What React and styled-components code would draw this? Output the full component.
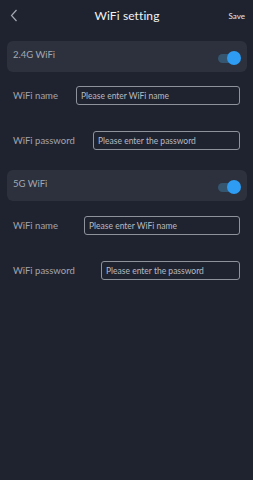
import React from "react";
import styled, { createGlobalStyle } from "styled-components";

const Global = createGlobalStyle`
  html, body {
    margin: 0;
    padding: 0;
    background: #1f2330;
  }
  * { box-sizing: border-box; }
`;

const Page = styled.div`
  width: 253px;
  height: 480px;
  background: #1f2330;
  font-family: Lato, "Noto Sans", "Liberation Sans", sans-serif;
  color: #d4d7de;
  padding: 0 6px 0 7px;
`;

const Header = styled.div`
  height: 30px;
  display: flex;
  align-items: center;
  padding-top: 1px;
`;

const Side = styled.div`
  width: 40px;
  display: flex;
  align-items: center;
  justify-content: ${(p) => (p.$end ? "flex-end" : "flex-start")};
`;

const Back = styled.div`
  display: flex;
  align-items: center;
  padding-left: 3px;
`;

const Title = styled.div`
  flex: 1;
  text-align: center;
  font-size: 12px;
  color: #f2f3f5;
  letter-spacing: 0.1px;
`;

const Save = styled.div`
  font-size: 8px;
  color: #e8e9ec;
  padding-right: 2px;
`;

const Card = styled.div`
  margin-top: ${(p) => p.$top}px;
  height: ${(p) => p.$h}px;
  background: #2c313d;
  border-radius: 6px;
  display: flex;
  align-items: center;
  justify-content: space-between;
  padding: 0 9px 0 6px;
`;

const CardLabel = styled.div`
  font-size: 9.5px;
  color: #a4a8b1;
  margin-top: -5px;
`;

const Toggle = styled.div`
  position: relative;
  width: 20px;
  height: 9px;
  border-radius: 5px;
  background: #36566f;
  margin-top: 3px;
`;

const Knob = styled.div`
  position: absolute;
  right: -3px;
  top: -2.5px;
  width: 14px;
  height: 14px;
  border-radius: 50%;
  background: #2e9cf2;
`;

const Row = styled.div`
  margin-top: ${(p) => p.$top}px;
  height: 19px;
  display: flex;
  align-items: center;
  padding-left: 6px;
  padding-right: 7px;
`;

const Label = styled.div`
  width: ${(p) => p.$w}px;
  font-size: 9.5px;
  color: #a1a5ae;
  flex-shrink: 0;
`;

const Input = styled.div`
  flex: 1;
  height: 19px;
  border: 1px solid #8e929b;
  border-radius: 3px;
  display: flex;
  align-items: center;
  padding-left: 4px;
  font-size: 8.5px;
  color: #b7bac1;
  white-space: nowrap;
`;

function Switch() {
  return (
    <Toggle>
      <Knob />
    </Toggle>
  );
}

export default function App() {
  return (
    <>
      <Global />
      <Page>
        <Header>
          <Side>
            <Back>
              <svg width="8" height="13" viewBox="0 0 8 13">
                <path d="M6.5 1 L1.5 6.5 L6.5 12" fill="none" stroke="#a3a7b0" strokeWidth="1.2" />
              </svg>
            </Back>
          </Side>
          <Title>WiFi setting</Title>
          <Side $end>
            <Save>Save</Save>
          </Side>
        </Header>

        <Card $top={11} $h={31}>
          <CardLabel>2.4G WiFi</CardLabel>
          <Switch />
        </Card>
        <Row $top={14}>
          <Label $w={63}>WiFi name</Label>
          <Input>Please enter WiFi name</Input>
        </Row>
        <Row $top={26}>
          <Label $w={80}>WiFi password</Label>
          <Input>Please enter the password</Input>
        </Row>

        <Card $top={20} $h={31}>
          <CardLabel>5G WiFi</CardLabel>
          <Switch />
        </Card>
        <Row $top={15}>
          <Label $w={71}>WiFi name</Label>
          <Input>Please enter WiFi name</Input>
        </Row>
        <Row $top={26}>
          <Label $w={88}>WiFi password</Label>
          <Input>Please enter the password</Input>
        </Row>
      </Page>
    </>
  );
}
